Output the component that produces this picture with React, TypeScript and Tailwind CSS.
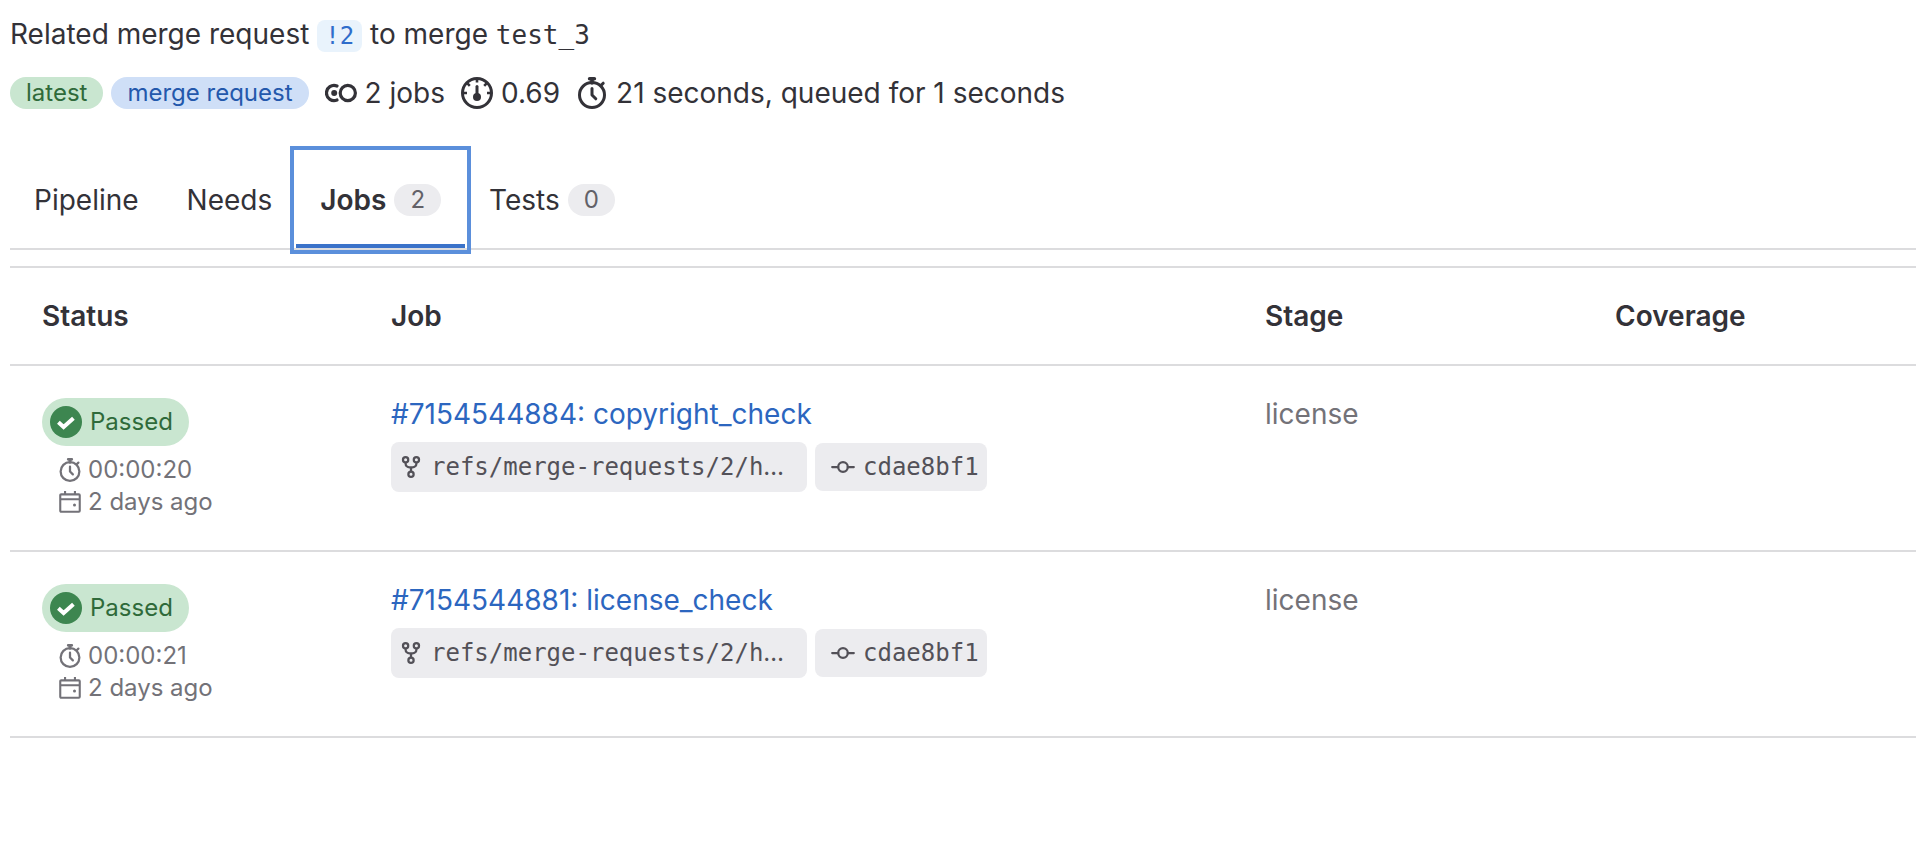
import type { ReactNode } from "react";

const GRAY = "border-[#dcdcde]";

function Icon({ className, children }: { className: string; children: ReactNode }) {
  return (
    <svg viewBox="0 0 16 16" fill="none" stroke="currentColor" strokeWidth="1.5" aria-hidden="true" className={className}>
      {children}
    </svg>
  );
}

function TimerIcon({ className }: { className: string }) {
  return (
    <Icon className={className}>
      <circle cx="8" cy="9" r="6.25" />
      <path d="M8 5.8V9l1.9 1.9" strokeLinecap="round" strokeLinejoin="round" />
      <path d="M6.8.9h2.4M8 1v2" strokeWidth="1.8" strokeLinecap="round" />
      <path d="M12.5 4.2l1.1-1.1" strokeLinecap="round" />
    </Icon>
  );
}

function PipelineIcon({ className }: { className: string }) {
  return (
    <Icon className={className}>
      <path d="M6 4.5A3.8 3.8 0 1 0 6 11.5" strokeWidth="1.6" strokeLinecap="round" />
      <circle cx="4.6" cy="8" r="1.5" fill="currentColor" stroke="none" />
      <circle cx="11.4" cy="8" r="3.8" strokeWidth="1.6" />
    </Icon>
  );
}

function GaugeIcon({ className }: { className: string }) {
  return (
    <Icon className={className}>
      <circle cx="8" cy="8" r="7.25" />
      <path d="M8 4.8v4.7" strokeLinecap="round" />
      <circle cx="8" cy="10" r="2" fill="currentColor" stroke="none" />
      <path d="M8 1.2v1.6M1.2 8h1.8M13 8h1.8M3.2 3.2l1.2 1.2M12.8 3.2l-1.2 1.2" strokeWidth="1.3" />
    </Icon>
  );
}

function CalendarIcon({ className }: { className: string }) {
  return (
    <Icon className={className}>
      <rect x="1.5" y="2.9" width="13" height="11.6" rx=".6" strokeWidth="1.4" />
      <path d="M1.5 6.2h13M4.7.7v2.2M11.3.7v2.2" strokeWidth="1.4" />
      <circle cx="11" cy="10" r="1" fill="currentColor" stroke="none" />
    </Icon>
  );
}

function ForkIcon({ className }: { className: string }) {
  return (
    <Icon className={className}>
      <circle cx="4.4" cy="3.2" r="1.75" />
      <circle cx="11.6" cy="3.2" r="1.75" />
      <circle cx="8" cy="12.9" r="1.75" />
      <path d="M4.4 5v.6C4.4 7.2 5.6 8.2 7 8.2h2c1.4 0 2.6-1 2.6-2.6V5M8 8.2v3" />
    </Icon>
  );
}

function CommitIcon({ className }: { className: string }) {
  return (
    <Icon className={className}>
      <circle cx="8" cy="8" r="3.2" />
      <path d="M.8 8h4M11.2 8h4" strokeLinecap="round" />
    </Icon>
  );
}

function CheckCircleIcon({ className }: { className: string }) {
  return (
    <Icon className={className}>
      <circle cx="8" cy="8" r="8" fill="#3d8650" stroke="none" />
      <path d="M4.2 8.1l2.6 2.4 4.9-4.4" stroke="#fff" strokeWidth="2" />
    </Icon>
  );
}

const tabs = [
  { name: "Pipeline" },
  { name: "Needs" },
  { name: "Jobs", count: 2, active: true },
  { name: "Tests", count: 0 },
];

const jobs = [
  { id: "7154544884", name: "copyright_check", duration: "00:00:20" },
  { id: "7154544881", name: "license_check", duration: "00:00:21" },
];

const mono = "font-['DejaVu_Sans_Mono',monospace]";

export default function App() {
  return (
    <main className="min-h-screen bg-white pl-[10px] pt-4 font-['Inter',sans-serif] text-[28px] leading-9 text-[#333238]">
      <p>
        Related merge request{" "}
        <a href="#mr" className={`${mono} inline-block rounded-lg bg-[#e9f3fc] px-2 text-[24px] leading-8 text-[#2f6dcb]`}>!2</a>{" "}
        to merge <span className={`${mono} text-[26px]`}>test_3</span>
      </p>

      <div className="mt-[22px] flex items-center whitespace-nowrap">
        <span className="rounded-full bg-[#c9e6d0] px-4 text-[24px] leading-8 text-[#2f6a3a]">latest</span>
        <span className="ml-2 rounded-full bg-[#cfdff7] px-4 text-[24px] leading-8 text-[#2358ac]">merge request</span>
        <PipelineIcon className="ml-4 mr-2 size-8" />
        <span>2 jobs</span>
        <GaugeIcon className="ml-4 mr-2 size-8" />
        <span>0.69</span>
        <TimerIcon className="ml-4 mr-2 size-8" />
        <span>21 seconds, queued for 1 seconds</span>
      </div>

      <div role="tablist" className={`mt-[41px] flex border-b-2 ${GRAY}`}>
        {tabs.map((tab) => (
          <button
            key={tab.name}
            type="button"
            role="tab"
            aria-selected={!!tab.active}
            className={
              tab.active
                ? "flex h-24 items-center gap-2 bg-white px-6 font-semibold shadow-[inset_0_-4px_0_#3a72c9] outline-4 outline-offset-2 outline-[#5b8fdb]"
                : "flex h-24 items-center gap-2 px-6"
            }
          >
            {tab.name}
            {tab.count !== undefined && (
              <span className="rounded-full bg-[#ececef] px-4 text-[24px] font-normal leading-8 text-[#626168]">{tab.count}</span>
            )}
          </button>
        ))}
      </div>

      <table className={`mt-4 w-full table-fixed border-collapse border-t-2 text-left leading-8 ${GRAY}`}>
        <colgroup>
          <col className="w-[349px]" />
          <col className="w-[874px]" />
          <col className="w-[350px]" />
          <col />
        </colgroup>
        <thead>
          <tr className={`border-b-2 ${GRAY}`}>
            {["Status", "Job", "Stage", "Coverage"].map((h) => (
              <th key={h} scope="col" className="p-8 font-semibold">{h}</th>
            ))}
          </tr>
        </thead>
        <tbody>
          {jobs.map((job) => (
            <tr key={job.id} className={`border-b-2 align-top ${GRAY}`}>
              <td className="p-8 text-[24px] text-[#737278]">
                <a href="#status" className="flex h-12 w-fit items-center gap-2 rounded-full bg-[#c9e6d0] pl-2 pr-4 text-[#2f6a3a]">
                  <CheckCircleIcon className="size-8" />
                  Passed
                </a>
                <div className="mt-2 flex items-center gap-1.5 pl-4">
                  <TimerIcon className="size-6" />
                  {job.duration}
                </div>
                <div className="flex items-center gap-1.5 pl-4">
                  <CalendarIcon className="size-6" />
                  <time>2 days ago</time>
                </div>
              </td>
              <td className="p-8">
                <a href={`#${job.id}`} className="block w-fit text-[#2c66bf]">
                  #{job.id}: {job.name}
                </a>
                <div className={`mt-3 flex items-center gap-2 text-[24px] text-[#535158] ${mono}`}>
                  <a href="#ref" className="flex h-[50px] w-[416px] items-center gap-2 rounded-lg bg-[#ececef] px-2">
                    <ForkIcon className="size-6 shrink-0" />
                    <span>refs/merge-requests/2/h<span className="font-['Inter',sans-serif]">…</span></span>
                  </a>
                  <a href="#commit" className="flex h-12 items-center gap-2 rounded-lg bg-[#ececef] pl-4 pr-2">
                    <CommitIcon className="size-6" />
                    cdae8bf1
                  </a>
                </div>
              </td>
              <td className="p-8 text-[#737278]">license</td>
              <td className="p-8" />
            </tr>
          ))}
        </tbody>
      </table>
    </main>
  );
}
